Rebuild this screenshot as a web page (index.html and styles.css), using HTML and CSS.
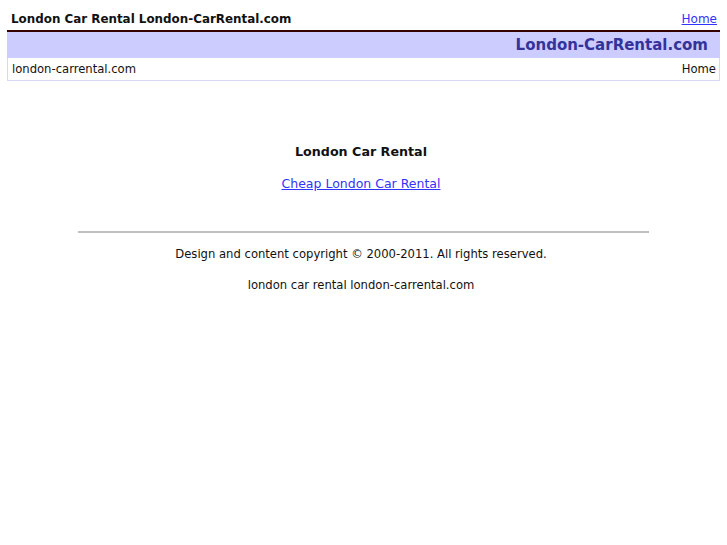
FILE: index.html
```html
<!DOCTYPE html>
<html>
<head>
<meta charset="utf-8">
<title>London Car Rental</title>
<link rel="stylesheet" href="styles.css">
</head>
<body>
<div class="top">
  <h1 class="title">London Car Rental London-CarRental.com</h1>
  <a class="top-link" href="#">Home</a>
</div>
<div class="banner">London-CarRental.com</div>
<div class="nav">
  <span>london-carrental.com</span>
  <span>Home</span>
</div>
<div class="main">
  <h2 class="heading">London Car Rental</h2>
  <a class="main-link" href="#">Cheap London Car Rental</a>
</div>
<hr class="rule">
<p class="foot">Design and content copyright © 2000-2011. All rights reserved.</p>
<p class="foot">london car rental london-carrental.com</p>
</body>
</html>
```
FILE: styles.css
```css
body {
  margin: 8px 7px;
  font-family: "DejaVu Sans", sans-serif;
  font-size: 11.6px;
  color: #111;
  background: #fff;
}
.top {
  display: flex;
  justify-content: space-between;
  align-items: flex-end;
  padding: 4px 3px 4px 4px;
  border-bottom: 2px solid #330000;
}
.title {
  margin: 0;
  font-size: 11.9px;
  font-weight: bold;
}
.top-link {
  color: #3333ff;
  font-size: 12px;
}
.banner {
  background: #ccccff;
  color: #333399;
  font-weight: bold;
  font-size: 15px;
  text-align: right;
  padding: 4px 12px 4px 0;
  height: 18px;
}
.nav {
  display: flex;
  justify-content: space-between;
  border: 1px solid #d8d8f4;
  border-top: none;
  padding: 4px 3px 4px 4px;
}
.main {
  text-align: center;
  padding: 63px 5px 0 0;
}
.heading {
  margin: 0 0 17px;
  font-size: 12.7px;
  font-weight: bold;
}
.main-link {
  color: #3333ff;
  font-size: 12.5px;
}
.rule {
  width: 80%;
  margin: 40px auto 14px;
  border: none;
  border-top: 2px solid #c0c0c0;
}
.foot {
  text-align: center;
  margin: 0 0 17px;
  padding-right: 5px;
}
```
